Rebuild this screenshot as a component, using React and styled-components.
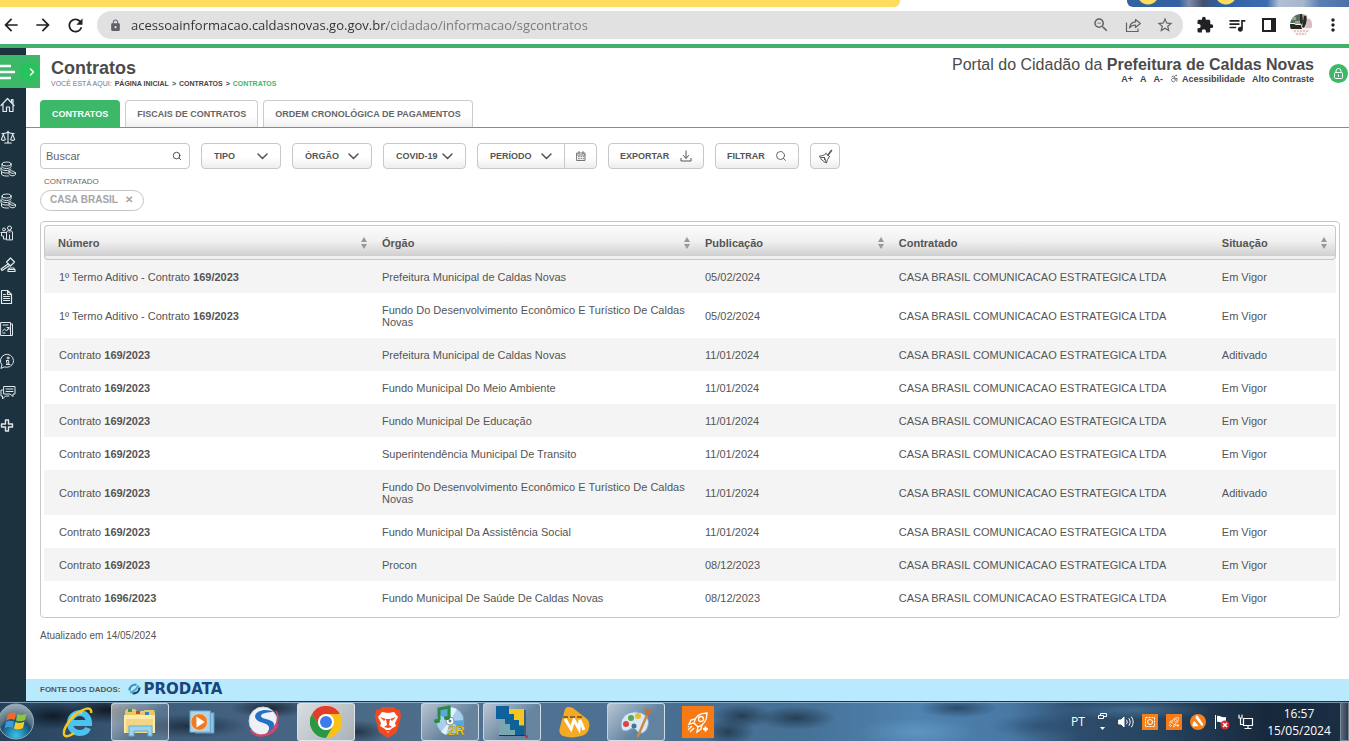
import React from 'react';
import { default as styled, createGlobalStyle } from 'styled-components';
import { Scale, Search, Accessibility } from 'lucide-react';
import {
  MdArrowBack, MdArrowForward, MdRefresh, MdLock, MdOutlineZoomOut,
  MdStarBorder, MdExtension, MdQueueMusic, MdMoreVert
} from 'react-icons/md';

const GlobalStyle = createGlobalStyle`
  * { box-sizing: border-box; }

  body {
    margin: 0;
    background: #fff;
    color: #555;
    font-family: "Liberation Sans", Arial, sans-serif;
    font-size: 11px;
  }

  button, input, select { font: inherit; color: inherit; margin: 0; }
  button { padding: 0; border: 0; background: none; cursor: pointer; }
  a { color: inherit; text-decoration: none; }
  svg { display: block; flex: none; }
`;

const Screen = styled.div`
  display: flex;
  flex-direction: column;
  min-height: 100vh;
`;

// ---------- browser ----------

const BookmarkStrip = styled.div`
  display: flex;
  justify-content: space-between;
  height: 7px;
  overflow: hidden;
`;

const YellowBanner = styled.div`
  width: 66.7%;
  background: #ffdc5e;
  border-bottom-right-radius: 6px;
`;

const PhotoBanner = styled.div`
  width: 222px;
  border-bottom-left-radius: 6px;
  background:
    radial-gradient(circle at 21px -6px, #ffdc5e 10px, transparent 11px),
    radial-gradient(circle at 99px -6px, #ffdc5e 10px, transparent 11px),
    linear-gradient(to right, #3461a4 0, #3461a4 52px, #7d8ca8 62px, #44506f 76px, #2f5fa5 92px, #3d6cae 140px, #b0bfd4 152px, #a6b6cb 176px, #5c80b5 192px, #4a70a8 100%);
`;

const BrowserBar = styled.div`
  display: flex;
  align-items: center;
  height: 37px;
  padding: 0 6px 1px 1px;
  gap: 12px;
  color: #202124;
`;

const BrowserButton = styled.button`
  display: flex;
  align-items: center;
  justify-content: center;
  width: 20px;
  height: 20px;
`;

const Omnibox = styled.label`
  display: flex;
  flex: 1;
  align-items: center;
  height: 28px;
  padding: 0 8px 0 12px;
  gap: 9px;
  border-radius: 14px;
  background: #e1e1e1;
  color: #5f6368;
`;

const Address = styled.input`
  flex: 1;
  min-width: 0;
  padding: 0;
  border: 0;
  outline: 0;
  font-family: "Open Sans", "Noto Sans", sans-serif;
  font-size: 13px;
  color: #202124;
  background: linear-gradient(to right, #303134 256px, #74777b 256px);
  background-clip: text;
  -webkit-text-fill-color: transparent;
`;

const BrowserTools = styled.div`
  display: flex;
  align-items: center;
  gap: 12px;
`;

// ---------- page ----------

const Page = styled.div`
  position: relative;
  display: flex;
  flex: 1;
  border-top: 4px solid #3fb168;
`;

const Sidebar = styled.nav`
  display: flex;
  flex-direction: column;
  flex: none;
  gap: 16px;
  width: 26px;
  padding-top: 49px;
  background: #1c323e;
  color: #e3eaed;
`;

const SideLink = styled.a`
  display: block;
  width: 16px;
  height: 16px;
`;

const MenuToggle = styled.button`
  position: absolute;
  top: 7px;
  left: 0;
  display: flex;
  align-items: center;
  justify-content: space-between;
  width: 40px;
  height: 33px;
  padding-right: 4px;
  color: #fff;
  background: radial-gradient(circle at 29px 17px, #27c35c 8px, #3db868 12px);
`;

const Content = styled.main`
  display: flex;
  flex-direction: column;
  flex: 1;
  min-width: 0;
`;

const Header = styled.header`
  display: flex;
  height: 52px;
  padding: 8px 1px 0 25px;
`;

const Heading = styled.div`
  flex: 1;
`;

const Title = styled.h1`
  margin: 2px 0;
  font-size: 18px;
  line-height: 20px;
  color: #4b4b4b;
`;

const Breadcrumb = styled.nav`
  display: flex;
  gap: 3px;
  font-size: 7px;
  line-height: 8px;
  font-weight: bold;
  color: #444;
`;

const Muted = styled.span`
  font-weight: normal;
  color: #777;
`;

const Here = styled.span`
  color: #3db868;
`;

const Portal = styled.div`
  display: flex;
  flex-direction: column;
  align-items: flex-end;
  margin-right: 15px;
`;

const PortalName = styled.div`
  font-size: 16px;
  line-height: 18px;
  color: #4b4b4b;
`;

const PortalLinks = styled.div`
  display: flex;
  align-items: center;
  gap: 7px;
  font-size: 9px;
  line-height: 10px;
  font-weight: bold;
  color: #444;

  a { display: flex; gap: 3px; }
`;

const LoginButton = styled.button`
  display: flex;
  align-items: center;
  justify-content: center;
  width: 19px;
  height: 19px;
  margin-top: 8px;
  border-radius: 50%;
  color: #fff;
  background: #3db868;
`;

const Tabs = styled.div`
  display: flex;
  gap: 5px;
  padding-left: 14px;
  border-bottom: 1px solid #3db868;
`;

const Tab = styled.button`
  height: 27px;
  padding: 0 11px 1px;
  border: 1px solid ${props => props.$active ? '#3db868' : '#ccc'};
  border-bottom: 0;
  border-radius: 4px 4px 0 0;
  font-size: 9px;
  font-weight: bold;
  color: ${props => props.$active ? '#fff' : '#666'};
  background: ${props => props.$active ? '#3db868' : 'linear-gradient(#fff 60%, #f0f0f0)'};
`;

const Filters = styled.div`
  display: flex;
  flex-wrap: wrap;
  gap: 11px;
  padding: 15px 14px 0;
`;

const Control = styled.div`
  position: relative;
  display: flex;
  align-items: center;
  width: ${props => props.$width};
  height: 26px;
  border: 1px solid #c8c8c8;
  border-radius: 4px;
  font-size: 10px;
  color: #555;
  background: ${props => props.$plain ? '#fff' : 'linear-gradient(#fff 55%, #ededed)'};
`;

const SearchInput = styled.input`
  flex: 1;
  min-width: 0;
  height: 24px;
  padding: 0 5px;
  border: 0;
  outline: 0;
  background: none;
  font-size: 11px;

  &::placeholder { color: #666; opacity: 1; }
`;

const SearchButton = styled.button`
  width: 17px;
  color: #333;
`;

const Select = styled.select`
  flex: 1;
  min-width: 0;
  height: 24px;
  padding: 0 0 1px 12px;
  border: 0;
  outline: 0;
  appearance: none;
  background: none;
  font-size: 9px;
  font-weight: bold;
`;

const SelectArrow = styled.span`
  position: absolute;
  right: ${props => props.$right};
  pointer-events: none;
`;

const CalendarButton = styled.button`
  display: flex;
  align-items: center;
  justify-content: center;
  width: 32px;
  height: 24px;
  border-left: 1px solid #c8c8c8;
`;

const ActionButton = styled.button`
  display: flex;
  align-items: center;
  justify-content: ${props => props.$iconOnly ? 'center' : 'space-between'};
  flex: 1;
  height: 24px;
  padding: ${props => props.$iconOnly ? '0' : '0 11px'};
  font-size: 9px;
  font-weight: bold;
`;

const Applied = styled.section`
  display: flex;
  flex-direction: column;
  align-items: flex-start;
  gap: 3px;
  padding: 8px 14px 10px;
`;

const AppliedLabel = styled.span`
  padding-left: 4px;
  font-size: 8px;
  line-height: 10px;
  color: #666;
`;

const Chip = styled.span`
  display: flex;
  align-items: center;
  gap: 7px;
  height: 21px;
  padding: 0 10px 2px 9px;
  border: 1px solid #c4c4c4;
  border-radius: 11px;
  font-size: 10px;
  font-weight: bold;
  color: #a5a5a5;
`;

const TableBox = styled.div`
  margin: 0 9px 0 14px;
  padding: 3px;
  border: 1px solid #c8c8c8;
  border-radius: 4px;
`;

const Table = styled.table`
  width: 100%;
  table-layout: fixed;
  border-collapse: separate;
  border-spacing: 0;
  line-height: 12px;
`;

const HeadCell = styled.th`
  width: ${props => props.$width};
  height: 35px;
  padding: 0 0 0 15px;
  border: solid #c8c8c8;
  border-width: 1px 0;
  text-align: left;
  background: linear-gradient(#fbfbfb, #f1f1f1 45%, #d0d0d0 90%, #f0f0f0 91%);

  &:first-child { border-left-width: 1px; border-radius: 4px 0 0 4px; padding-left: 13px; }
  &:last-child { border-right-width: 1px; border-radius: 0 4px 4px 0; padding-right: 8px; }
`;

const HeadLabel = styled.div`
  display: flex;
  align-items: center;
  justify-content: space-between;
`;

const Row = styled.tr`
  &:nth-child(odd) { background: #f4f4f4; }
`;

const Cell = styled.td`
  height: 33px;
  padding: 11px 0 10px 15px;
`;

const Updated = styled.p`
  margin: 12px 14px;
  font-size: 10px;
  line-height: 12px;
`;

const Source = styled.footer`
  display: flex;
  align-items: center;
  gap: 8px;
  height: 22px;
  margin-top: auto;
  padding: 0 14px 2px;
  font-size: 8px;
  font-weight: bold;
  background: #b9e9fc;
`;

const Brand = styled.span`
  display: flex;
  align-items: center;
  gap: 2px;
  font-family: "DejaVu Sans", sans-serif;
  font-size: 15px;
  line-height: 16px;
  color: #17457c;
`;

// ---------- taskbar ----------

const Taskbar = styled.div`
  display: flex;
  align-items: center;
  height: 40px;
  border-top: 1px solid #16364c;
  box-shadow: inset 0 1px 0 rgba(190, 215, 235, .6);
  color: #fff;
  background:
    radial-gradient(ellipse 30px 12px at 55% 14px, rgba(16, 28, 42, .6), transparent),
    radial-gradient(ellipse 40px 12px at 59% 16px, rgba(16, 28, 42, .6), transparent),
    radial-gradient(ellipse 26px 14px at 54% 30px, rgba(16, 30, 46, .6), transparent),
    radial-gradient(ellipse 40px 10px at 71% 6px, rgba(22, 42, 64, .6), transparent),
    radial-gradient(ellipse 50px 12px at 77% 24px, rgba(30, 55, 80, .4), transparent),
    radial-gradient(ellipse 60px 14px at 68% 30px, rgba(110, 165, 210, .5), transparent),
    radial-gradient(ellipse 80px 10px at 84% 8px, rgba(90, 140, 185, .5), transparent),
    radial-gradient(ellipse 60px 12px at 14% 24px, rgba(10, 18, 28, .6), transparent),
    radial-gradient(ellipse 40px 10px at 20% 6px, rgba(10, 18, 28, .7), transparent),
    radial-gradient(ellipse 40px 14px at 4% 14px, rgba(8, 16, 26, .8), transparent),
    radial-gradient(ellipse 40px 14px at 8% 8px, rgba(8, 12, 18, .8), transparent),
    radial-gradient(ellipse 30px 12px at 26.500% 30px, rgba(12, 22, 34, .6), transparent),
    linear-gradient(to right, #26405a, #3e5d7c 12%, #4a6885 24%, #527291 38%, #476f92 52%, #467298 60%, #5083b0 68%, #4878a4 75%, #2d4d6c 80%, #27435e 86%, #17283b 94%, #1b2f45);
`;

const StartButton = styled.button`
  width: 49px;
`;

const TaskList = styled.div`
  display: flex;
  flex: 1;
  gap: 4px;
`;

const TaskButton = styled.button`
  display: flex;
  align-items: center;
  justify-content: center;
  width: 58px;
  height: 38px;
  border: 1px solid ${props => props.$open ? 'rgba(225, 235, 242, .75)' : 'transparent'};
  border-radius: 3px;
  background: ${props => {
    if (props.$focused) return 'linear-gradient(135deg, #d8dde0, #aab2b8)';
    return props.$open ? 'linear-gradient(135deg, rgba(255,255,255,.6), rgba(170,190,205,.25) 60%)' : 'none';
  }};
`;

const Tray = styled.div`
  display: flex;
  align-items: center;
  gap: 8px;
  padding-right: 4px;
  font-family: "Open Sans", "Noto Sans", sans-serif;
  font-size: 12px;
`;

const TrayButton = styled.button`
  display: flex;
  justify-content: center;
  min-width: 16px;
`;

const Clock = styled.time`
  width: 74px;
  font-size: 12px;
  line-height: 17px;
  text-align: center;
  white-space: nowrap;
`;

const ShowDesktop = styled.button`
  align-self: stretch;
  width: 9px;
  border: 1px solid #7c8b99;
  background: linear-gradient(to right, #5d6d7d, #2c3c4c);
`;

// ---------- drawings ----------

function Line({ size = 16, box = 16, width = 1, children }) {
  return (
    <svg width={size} height={size} viewBox={`0 0 ${box} ${box}`} fill="none"
      stroke="currentColor" strokeWidth={width} strokeLinecap="round" strokeLinejoin="round">
      {children}
    </svg>
  );
}

const ShareIcon = () => (
  <Line width={1.2}>
    <path d="M1.500 6v8.500h11.500V12" />
    <path d="M4.500 11c.6-4.500 3-6 6-6.100V2.500L15.300 6.500l-4.800 4V8c-2.800 0-4.500.8-6 3z" />
  </Line>
);

const PanelIcon = () => (
  <svg width="14" height="14" viewBox="0 0 14 14">
    <path fill="currentColor" fillRule="evenodd" d="M0 0h14v14H0zM2 2v10h7V2z" />
  </svg>
);

const Avatar = () => (
  <svg width="22" height="22" viewBox="0 0 22 22">
    <defs><clipPath id="face"><circle cx="11" cy="11" r="11" /></clipPath></defs>
    <g clipPath="url(#face)">
      <path fill="#f7f3f2" d="M0 0h22v22H0z" />
      <path fill="#5c6e5a" d="M0 0h11v9H0z" />
      <path fill="#9ba38f" d="M2 3h4v3H2zM5 7h5v3H5zM11 0h6v7h-4z" />
      <path fill="#262c25" d="M0 10h4l2 1h5l1 4H0zM10 0h2l1 7-1 4-2-2zM14 2l2 0 1 6-3 6-2-1z" />
      <path fill="#d7bdc4" d="M17 5c3-1 5 1 5 3v6h-7z" />
      <path stroke="#df9999" strokeDasharray="2 1" d="M4 17h14M6 20h10" />
    </g>
  </svg>
);

const HouseIcon = () => (
  <Line width={1.2}><path d="M1 8.500l6.500-7 6.500 7M3 7v7.500h3.500V10h3v4.500H13V7M11.500 5V2.500h1.500V7" /></Line>
);

const CoinsIcon = () => (
  <Line>
    <ellipse cx="6.500" cy="3" rx="4.500" ry="2" />
    <path d="M2 3v2.500c0 1 2 2 4.500 2s4.500-1 4.500-2V3M1 7c0 1.500 2 2.500 5 2.500 2 0 4-.5 5-1.500M1 7v2.500C1 11 3 12 6 12h2M1.500 10.500V13c0 1 2 2 5 2h2" />
    <path d="M9 10.500c2-1.500 5-.5 6 1M9 10.500V13c1 2 5 2.500 6.500.5v-2c-2 1.500-5 1-6.500-1z" />
  </Line>
);

const PeopleIcon = () => (
  <Line>
    <circle cx="4" cy="4.500" r="1.500" /><circle cx="9.500" cy="3" r="2" />
    <path d="M1 7.500h5M1.500 7.500V11h2v3h3M6.500 14.500V8c0-1.500 1-2.500 3-2.500s3 1 3 2.500v6.500zM9.500 10v4M9 7h1" />
  </Line>
);

const GavelIcon = () => (
  <Line width={1.2}>
    <path d="M6.500 5l4-4 4 4-4 4zM8 7L1 12l1 1.500 7.500-5M8 14.500v-2h7v2zM9 12.500V11h5v1.500" />
  </Line>
);

const DocumentIcon = () => (
  <Line width={1.200}>
    <path d="M1.500 1.500h6l4 4v9h-10zM7.500 1.500v4h4M3.500 7.500h6M3.500 9.500h6M3.500 11.500h6M3.500 5.500h2" />
  </Line>
);

const ReportIcon = () => (
  <Line>
    <path d="M1 1.500h9.500v13H1zM10.500 3h2v11.500H2.500M3 4h5M2.500 10l2-2 2 2 2.500-3.500M7 6.500h2v2M3 12h2" />
  </Line>
);

const InfoIcon = () => (
  <Line>
    <path d="M1 15l1-3A6.500 6.500 0 1 1 5 14z" />
    <circle cx="8" cy="5" r="1" /><path d="M6.500 7.500h2.200V11M6.500 11.500h3.500M6.500 7.500V9h.5v2.500" />
  </Line>
);

const ChatIcon = () => (
  <Line>
    <path d="M4 1.500h11v7.500h-2v2.500L10 9H4zM6 4h7M6 6.500h7M2.500 5H1v6h1.500v3l3-3H9" />
  </Line>
);

const PlusIcon = () => (
  <Line width={1.400}><path d="M5.500 3h3v4h4v3h-4v4h-3v-4h-4V7h4z" /></Line>
);

const Chevron = () => (
  <Line size={11} box={11} width={1.500}><path d="M1 3l4.500 4.500L10 3" /></Line>
);

const CalendarIcon = () => (
  <Line size={10} box={10} width={.8}>
    <path d="M1 2h8v7.500H1zM1 4h8M3 .5v2M7 .5v2" />
    <path strokeDasharray="1 1.500" d="M2.500 5.700h5.500M2.500 7.700h5.500" />
  </Line>
);

const DownloadIcon = () => (
  <Line size={12} box={12}><path d="M6 1v7M3.500 5.500L6 8.500l2.500-3M1 8.500V11h10V8.500" /></Line>
);

const BroomIcon = () => (
  <Line size={15} box={15}>
    <path strokeWidth="1.600" d="M13.500 1.500L10 6" />
    <path d="M8 4.500l3.500 3M8 4.500C6 6.500 4 7 1.500 7c1 3 3.500 5.500 7 7 .5-2.500 1.500-4.500 3-6.500M3.500 8.500h3v2M6.500 8.500l1.500 4" />
  </Line>
);

const SortIcon = () => (
  <svg width="6" height="12" viewBox="0 0 6 12" fill="#999">
    <path d="M0 5l3-5 3 5zM0 7h6l-3 5z" />
  </svg>
);

const ProdataMark = () => (
  <svg width="13" height="12" viewBox="0 0 13 12" fill="none" strokeWidth="2.200">
    <path stroke="#2f8fc4" d="M1.500 7.500C1.500 4 4.500 1.500 8.500 1.500" />
    <path stroke="#4fb0c0" d="M2 9.500C5 9 8.500 6 10.500 2.500" />
    <path stroke="#174a80" d="M4.500 10.500c4 0 7-2.500 7-6" />
  </svg>
);

const WindowsOrb = () => (
  <svg width="35" height="37" viewBox="0 0 35 37">
    <defs>
      <radialGradient id="orb" cx=".5" cy=".9" r=".9">
        <stop offset="0" stopColor="#35c4f0" /><stop offset=".5" stopColor="#17506f" /><stop offset=".6" stopColor="#56707f" /><stop offset="1" stopColor="#9fb0bb" />
      </radialGradient>
    </defs>
    <circle cx="16" cy="18.500" r="17.500" fill="url(#orb)" stroke="#8fa9bc" />
    <path fill="#ee6a2c" d="M8 11c3-2 5-2 8-.5L14.500 17c-3-1.400-5-1.300-8 .5z" />
    <path fill="#8cc63f" d="M17.500 11c3 1.400 6 1.400 9-.4L25 17c-3 1.700-6 1.600-9 .4z" />
    <path fill="#3c9be0" d="M6 19c3-1.700 5-1.700 8-.4L12.500 25c-3-1.300-5-1.300-8 .4z" />
    <path fill="#fcc827" d="M15.500 19c3 1.400 6 1.400 9-.4L23 25c-3 1.700-6 1.600-9 .4z" />
  </svg>
);

const ExplorerE = () => (
  <svg width="32" height="32" viewBox="0 0 32 32" fill="none">
    <path stroke="#4dc2ef" strokeWidth="6" d="M8 17h19c0-6-4-10-9-10S8 11 8 17s4 10 10 10c4 0 7-2 8-5" />
    <path stroke="#a7e6fc" strokeWidth="1.500" d="M9 13c2-5 6-7 11-6" />
    <path stroke="#f5c71d" strokeWidth="2.500" d="M29 7c1-4-2-6-8-3C10 9 1 22 2 28c1 4 6 2 10-1" />
  </svg>
);

const FolderIcon = () => (
  <svg width="34" height="32" viewBox="0 0 34 32">
    <path fill="#e8c767" d="M2 5l2-2h8l2 2h6l2-1h9l1 3v20H2z" />
    <path fill="#3c9a52" d="M5 3h4v3H5z" /><path fill="#c6483d" d="M13 5h4v3h-4z" /><path fill="#3683c5" d="M22 6h4v3h-4z" />
    <path fill="#faeaa8" d="M1 9h31v18H1z" /><path fill="#f2d683" d="M3 13h27v14H3z" />
    <path fill="#9bd5ef" stroke="#5eadd1" d="M6 30V20h23v10h-4v-5H11v5z" />
  </svg>
);

const PlayerIcon = () => (
  <svg width="28" height="26" viewBox="0 0 30 28">
    <path fill="#8cc4e4" stroke="#4f8bb3" d="M8 4h20v22H8z" /><path fill="#a9d6ee" stroke="#609bc2" d="M2 2h22v23H2z" />
    <circle cx="12" cy="14" r="9" fill="#ef7a24" stroke="#fbc79a" /><path fill="#fff" d="M9 8l9 6-9 6z" />
  </svg>
);

const SwirlIcon = () => (
  <svg width="34" height="34" viewBox="0 0 34 34">
    <circle cx="16" cy="16" r="14" fill="#eef2f7" stroke="#c3d0de" />
    <path fill="#2671c4" d="M27 7C20 3 9 5 8 11c0 5 6 6 11 8 4 2 4 5 1 9 7-2 9-7 6-11-3-3-12-3-12-6 0-3 7-4 13-4z" />
    <path fill="none" stroke="#d6436d" strokeWidth="1.600" d="M3 25c7 10 25 6 28-12M7 29c9 5 21 0 24-10M31 13c0-3-1-5-2-7" />
  </svg>
);

const ChromeIcon = () => (
  <svg width="32" height="32" viewBox="0 0 32 32">
    <circle cx="16" cy="16" r="16" fill="#fbc116" />
    <path fill="#e33b2e" d="M2.100 8A16 16 0 0 1 29.900 8H16a8 8 0 0 0-7 12z" />
    <path fill="#279847" d="M2.100 8A16 16 0 0 0 16 32l7-12a8 8 0 0 1-14 0z" />
    <circle cx="16" cy="16" r="8" fill="#fff" /><circle cx="16" cy="16" r="6" fill="#3b7ded" />
  </svg>
);

const LionIcon = () => (
  <svg width="28" height="32" viewBox="0 0 28 32">
    <path fill="#f4481e" d="M8 1h12l3 3h3l1 6-4 16-9 6-9-6L1 10l1-6h3z" />
    <path fill="#fff" d="M8 6l6 1 6-1 4 5-3 6 1 3-5 3-3 4-3-4-5-3 1-3-3-6z" />
    <path fill="#f4481e" d="M6 11l6 2-2 2zM22 11l-6 2 2 2zM12 13h4l-1 6 3 2-4 1-4-1 3-2zM11 24h6l-3 2z" />
  </svg>
);

const DiscIcon = () => (
  <svg width="34" height="34" viewBox="0 0 34 34">
    <circle cx="17" cy="16" r="14" fill="#a9cfeb" stroke="#6f9cbd" />
    <path fill="#5ca7dc" d="M17 16L5 9a14 14 0 0 1 10-7zM17 16l12 8a14 14 0 0 0 2-9z" />
    <path fill="#e4f2fb" d="M17 16L18 2l6 2zM17 16L8 27l5 3z" />
    <circle cx="17" cy="16" r="4" fill="#fff" stroke="#7b99ae" /><circle cx="17" cy="16" r="1.500" fill="#647b8b" />
    <path fill="none" stroke="#2c8a3e" strokeWidth="3" d="M6 15V4l10-2v11" />
    <ellipse cx="4" cy="16" rx="3" ry="2" fill="#2c8a3e" /><ellipse cx="14" cy="13" rx="3" ry="2" fill="#2c8a3e" />
    <text x="15" y="30" fontSize="13" fontWeight="bold" fontFamily="Liberation Sans" fill="#f4d31c" stroke="#7d6a10" strokeWidth=".4">2R</text>
  </svg>
);

const BlocksIcon = () => (
  <svg width="32" height="32" viewBox="0 0 32 32">
    <path fill="#f3c71f" d="M13 3h15v16H13z" /><path fill="#78a7b2" d="M3 14h16v15H3z" />
    <path fill="#10609a" d="M0 0h13v8h5v6h5v6h5v9h-9v-5h-5v-6H9v-5H0z" />
    <path stroke="#1d3743" fill="none" d="M3 29.500h26V4" /><circle cx="30.500" cy="30.500" r="1.500" fill="#dd2222" />
  </svg>
);

const AmberIcon = () => (
  <svg width="32" height="32" viewBox="0 0 32 32">
    <path fill="#f5aa26" d="M7 3c2-3 5-2 8-1l14 11c3 3 3 8 1 12-2 4-6 5-12 6-5 1-9 0-13-1-4-2-4-5-3-9z" />
    <path fill="none" stroke="#fff" strokeWidth="3" d="M7 13l6 10 3-9 5 9 1-9 4 10" />
    <path stroke="#67502d" strokeWidth="1.500" d="M5 11h20" strokeDasharray="5 2" />
  </svg>
);

const PaintIcon = () => (
  <svg width="34" height="32" viewBox="0 0 34 32">
    <path fill="#d9e8f4" stroke="#7aa5c9" d="M2 20C1 10 10 5 18 6c9 1 13 7 11 14-2 8-9 9-11 5-2-3-5-3-8-1-4 2-8 1-8-4z" />
    <circle cx="7" cy="18" r="3" fill="#d84545" /><circle cx="12" cy="12" r="3" fill="#5ba84e" />
    <circle cx="19" cy="10" r="3" fill="#ebbd30" /><circle cx="15" cy="20" r="2.500" fill="#437494" />
    <path stroke="#c98a45" strokeWidth="2.500" strokeLinecap="round" d="M19 30L28 9" /><path fill="#bb7240" d="M25 2c3 1 5 2 8 1-1 4-2 5-6 7z" />
  </svg>
);

function Rocket({ size }) {
  return (
    <svg width={size} height={size} viewBox="0 0 32 32" fill="none" stroke="#fff" strokeWidth="1.300">
      <path fill="#f77a14" stroke="none" d="M0 0h32v32H0z" />
      <path d="M12 17c1-6 5-10 13-10 0 8-3 12-9 14zM13 13l-4 1-2 4 5-1M16 21l-1 5 4-3 1-4M10 20l-4 4M12 22l-4 4M7 20l-1 1" />
      <circle cx="19" cy="13" r="2.500" /><path strokeWidth="2" d="M21 23h5M23.500 20.500v5" />
    </svg>
  );
}

const RestoreIcon = () => (
  <svg width="9" height="20" viewBox="0 0 9 20" fill="none" stroke="#fff">
    <path d="M.5 3.500h5v3h-5zM2.500 3.500v-2h6v3h-3" /><path fill="#fff" stroke="none" d="M2 15h5l-2.500 3z" />
  </svg>
);

const SpeakerIcon = () => (
  <Line><path fill="currentColor" d="M1 6h2l3-3v10l-3-3H1z" /><path d="M8.500 6c1 1 1 3 0 4M11 4.500c1.600 2 1.600 5 0 7M13.500 3c2.200 3 2.200 7 0 10" /></Line>
);

const ChipIcon = () => (
  <svg width="16" height="16" viewBox="0 0 16 16" fill="none" stroke="#fff">
    <path fill="#f0811d" stroke="none" d="M0 0h16v16H0z" /><path d="M3.500 3.500h9v9h-9z" strokeDasharray="2 1" /><circle cx="8" cy="8" r="2.500" />
  </svg>
);

const AvastIcon = () => (
  <svg width="16" height="16" viewBox="0 0 16 16">
    <circle cx="8" cy="8" r="8" fill="#f58220" /><path fill="#fff" d="M6 2c1-1 2 0 2.500 1L13 10c1 2-1 2-2 1L5.500 4zM4.500 7l4 5-5.500.5c-1-1-.5-4 1.500-5.500z" />
  </svg>
);

const FlagIcon = () => (
  <svg width="16" height="16" viewBox="0 0 16 16">
    <path stroke="#fff" d="M1.500 1v14" /><path fill="#fff" d="M3 2c3-1 4 2 9 1v6C7 10 6 7 3 8z" />
    <circle cx="11" cy="11" r="4.500" fill="#d52b2b" /><path stroke="#fff" strokeWidth="1.500" d="M9 9l4 4M13 9l-4 4" />
  </svg>
);

const NetworkIcon = () => (
  <Line width={1.200}><path d="M5.500 4.500h9v7h-9zM10 12v2M7 14.500h6M1 1v3h3V1M2.500 4v6.500H5" /></Line>
);

// ---------- data ----------

const sideLinks = [
  { label: 'Início', icon: <HouseIcon /> },
  { label: 'Legislação', icon: <Scale size={16} strokeWidth={1.7} /> },
  { label: 'Receitas', icon: <CoinsIcon /> },
  { label: 'Despesas', icon: <CoinsIcon /> },
  { label: 'Pessoal', icon: <PeopleIcon /> },
  { label: 'Licitações', icon: <GavelIcon /> },
  { label: 'Contratos', icon: <DocumentIcon /> },
  { label: 'Relatórios', icon: <ReportIcon /> },
  { label: 'Informação', icon: <InfoIcon /> },
  { label: 'Ouvidoria', icon: <ChatIcon /> },
  { label: 'Mais', icon: <PlusIcon /> },
];

const columns = [
  { label: 'Número', width: '25%', sortable: true },
  { label: 'Órgão', width: '25%', sortable: true },
  { label: 'Publicação', width: '15%', sortable: true },
  { label: 'Contratado', width: '25%', sortable: false },
  { label: 'Situação', width: '10%', sortable: true },
];

const company = 'CASA BRASIL COMUNICACAO ESTRATEGICA LTDA';
const tourism = 'Fundo Do Desenvolvimento Econômico E Turístico De Caldas Novas';

const contracts = [
  ['1º Termo Aditivo - Contrato', '169/2023', 'Prefeitura Municipal de Caldas Novas', '05/02/2024', 'Em Vigor'],
  ['1º Termo Aditivo - Contrato', '169/2023', tourism, '05/02/2024', 'Em Vigor'],
  ['Contrato', '169/2023', 'Prefeitura Municipal de Caldas Novas', '11/01/2024', 'Aditivado'],
  ['Contrato', '169/2023', 'Fundo Municipal Do Meio Ambiente', '11/01/2024', 'Em Vigor'],
  ['Contrato', '169/2023', 'Fundo Municipal De Educação', '11/01/2024', 'Em Vigor'],
  ['Contrato', '169/2023', 'Superintendência Municipal De Transito', '11/01/2024', 'Em Vigor'],
  ['Contrato', '169/2023', tourism, '11/01/2024', 'Aditivado'],
  ['Contrato', '169/2023', 'Fundo Municipal Da Assistência Social', '11/01/2024', 'Em Vigor'],
  ['Contrato', '169/2023', 'Procon', '08/12/2023', 'Em Vigor'],
  ['Contrato', '1696/2023', 'Fundo Municipal De Saúde De Caldas Novas', '08/12/2023', 'Em Vigor'],
];

const tasks = [
  { label: 'Internet Explorer', icon: <ExplorerE /> },
  { label: 'Arquivos', icon: <FolderIcon />, open: true },
  { label: 'Media Player', icon: <PlayerIcon /> },
  { label: 'SpeedUp', icon: <SwirlIcon /> },
  { label: 'Chrome', icon: <ChromeIcon />, open: true, focused: true },
  { label: 'Brave', icon: <LionIcon /> },
  { label: 'Gravador', icon: <DiscIcon />, open: true },
  { label: 'Blocos', icon: <BlocksIcon />, open: true },
  { label: 'Winamp', icon: <AmberIcon /> },
  { label: 'Paint', icon: <PaintIcon />, open: true },
  { label: 'Cleanup', icon: <Rocket size={32} /> },
];

// ---------- sections ----------

function Browser() {
  return (
    <div>
      <BookmarkStrip>
        <YellowBanner />
        <PhotoBanner />
      </BookmarkStrip>
      <BrowserBar>
        <BrowserButton aria-label="Voltar"><MdArrowBack size={20} /></BrowserButton>
        <BrowserButton aria-label="Avançar"><MdArrowForward size={20} /></BrowserButton>
        <BrowserButton aria-label="Recarregar"><MdRefresh size={21} /></BrowserButton>
        <Omnibox>
          <MdLock size={13} />
          <Address
            aria-label="Endereço"
            defaultValue="acessoainformacao.caldasnovas.go.gov.br/cidadao/informacao/sgcontratos" />
          <BrowserTools>
            <BrowserButton aria-label="Zoom"><MdOutlineZoomOut size={18} /></BrowserButton>
            <BrowserButton aria-label="Compartilhar"><ShareIcon /></BrowserButton>
            <BrowserButton aria-label="Favorito"><MdStarBorder size={18} /></BrowserButton>
          </BrowserTools>
        </Omnibox>
        <BrowserTools>
          <BrowserButton aria-label="Extensões"><MdExtension size={18} /></BrowserButton>
          <BrowserButton aria-label="Mídia"><MdQueueMusic size={20} /></BrowserButton>
          <BrowserButton aria-label="Painel lateral"><PanelIcon /></BrowserButton>
          <BrowserButton aria-label="Perfil"><Avatar /></BrowserButton>
          <BrowserButton aria-label="Menu"><MdMoreVert size={20} /></BrowserButton>
        </BrowserTools>
      </BrowserBar>
    </div>
  );
}

function Dropdown({ label, width }) {
  return (
    <Control $width={width}>
      <Select aria-label={label}>
        <option>{label}</option>
      </Select>
      <SelectArrow $right="12px"><Chevron /></SelectArrow>
    </Control>
  );
}

function FilterBar() {
  return (
    <Filters>
      <Control $width="150px" $plain>
        <SearchInput aria-label="Buscar" placeholder="Buscar" />
        <SearchButton aria-label="Pesquisar"><Search size={10} /></SearchButton>
      </Control>
      <Dropdown label="TIPO" width="80px" />
      <Dropdown label="ÓRGÃO" width="80px" />
      <Dropdown label="COVID-19" width="83px" />
      <Control $width="120px">
        <Select aria-label="PERÍODO">
          <option>PERÍODO</option>
        </Select>
        <SelectArrow $right="44px"><Chevron /></SelectArrow>
        <CalendarButton aria-label="Calendário"><CalendarIcon /></CalendarButton>
      </Control>
      <Control $width="96px"><ActionButton>EXPORTAR <DownloadIcon /></ActionButton></Control>
      <Control $width="84px"><ActionButton>FILTRAR <Search size={12} strokeWidth={1.8} /></ActionButton></Control>
      <Control $width="30px"><ActionButton aria-label="Limpar" $iconOnly><BroomIcon /></ActionButton></Control>
    </Filters>
  );
}

function ContractsTable() {
  return (
    <TableBox>
      <Table>
        <thead>
          <tr>
            {columns.map(column => (
              <HeadCell key={column.label} $width={column.width}>
                <HeadLabel>
                  {column.label}
                  {column.sortable && <SortIcon />}
                </HeadLabel>
              </HeadCell>
            ))}
          </tr>
        </thead>
        <tbody>
          {contracts.map(([kind, number, organ, date, status], i) => (
            <Row key={i}>
              <Cell>{kind} <b>{number}</b></Cell>
              <Cell>{organ}</Cell>
              <Cell>{date}</Cell>
              <Cell>{company}</Cell>
              <Cell>{status}</Cell>
            </Row>
          ))}
        </tbody>
      </Table>
    </TableBox>
  );
}

function Desktop() {
  return (
    <Taskbar>
      <StartButton aria-label="Iniciar"><WindowsOrb /></StartButton>
      <TaskList>
        {tasks.map(task => (
          <TaskButton key={task.label} aria-label={task.label} $open={task.open} $focused={task.focused}>
            {task.icon}
          </TaskButton>
        ))}
      </TaskList>
      <Tray>
        <TrayButton>PT</TrayButton>
        <TrayButton aria-label="Restaurar"><RestoreIcon /></TrayButton>
        <TrayButton aria-label="Volume"><SpeakerIcon /></TrayButton>
        <TrayButton aria-label="Driver"><ChipIcon /></TrayButton>
        <TrayButton aria-label="Cleanup"><Rocket size={16} /></TrayButton>
        <TrayButton aria-label="Antivírus"><AvastIcon /></TrayButton>
        <TrayButton aria-label="Central de ações"><FlagIcon /></TrayButton>
        <TrayButton aria-label="Rede"><NetworkIcon /></TrayButton>
        <Clock>16:57<br />15/05/2024</Clock>
      </Tray>
      <ShowDesktop aria-label="Mostrar área de trabalho" />
    </Taskbar>
  );
}

function App() {

  return (
    <Screen>
      <GlobalStyle />
      <Browser />
      <Page>
        <Sidebar>
          {sideLinks.map(link => (
            <SideLink key={link.label} href="#" aria-label={link.label}>{link.icon}</SideLink>
          ))}
        </Sidebar>
        <Content>
          <Header>
            <Heading>
              <Title>Contratos</Title>
              <Breadcrumb>
                <Muted>VOCÊ ESTÁ AQUI:</Muted>
                <a href="#">PÁGINA INICIAL</a>
                <span>&gt;</span>
                <a href="#">CONTRATOS</a>
                <span>&gt;</span>
                <Here>CONTRATOS</Here>
              </Breadcrumb>
            </Heading>
            <Portal>
              <PortalName>Portal do Cidadão da <b>Prefeitura de Caldas Novas</b></PortalName>
              <PortalLinks>
                <a href="#">A+</a>
                <a href="#">A</a>
                <a href="#">A-</a>
                <a href="#"><Accessibility size={9} /> Acessibilidade</a>
                <a href="#">Alto Contraste</a>
              </PortalLinks>
            </Portal>
            <LoginButton aria-label="Entrar">
              <Line size={13} box={13}>
                <rect x="2.500" y="5.500" width="8" height="6" rx="1" />
                <path d="M4 5.500V4a2.500 2.500 0 0 1 5 0v1.500M6.500 8v1.500" />
              </Line>
            </LoginButton>
          </Header>
          <Tabs>
            <Tab $active>CONTRATOS</Tab>
            <Tab>FISCAIS DE CONTRATOS</Tab>
            <Tab>ORDEM CRONOLÓGICA DE PAGAMENTOS</Tab>
          </Tabs>
          <FilterBar />
          <Applied>
            <AppliedLabel>CONTRATADO</AppliedLabel>
            <Chip>CASA BRASIL <button aria-label="Remover">✕</button></Chip>
          </Applied>
          <ContractsTable />
          <Updated>Atualizado em 14/05/2024</Updated>
          <Source>
            FONTE DOS DADOS:
            <Brand><ProdataMark /> PRODATA</Brand>
          </Source>
        </Content>
        <MenuToggle aria-label="Abrir menu">
          <svg width="16" height="16" viewBox="0 0 16 16" stroke="#fff" strokeWidth="2.500">
            <path d="M0 2h11M0 8h15M0 14h11" />
          </svg>
          <Line size={8} box={8} width={1.500}><path d="M2.500 1l3 3-3 3" /></Line>
        </MenuToggle>
      </Page>
      <Desktop />
    </Screen>
  );
}

export default App;
